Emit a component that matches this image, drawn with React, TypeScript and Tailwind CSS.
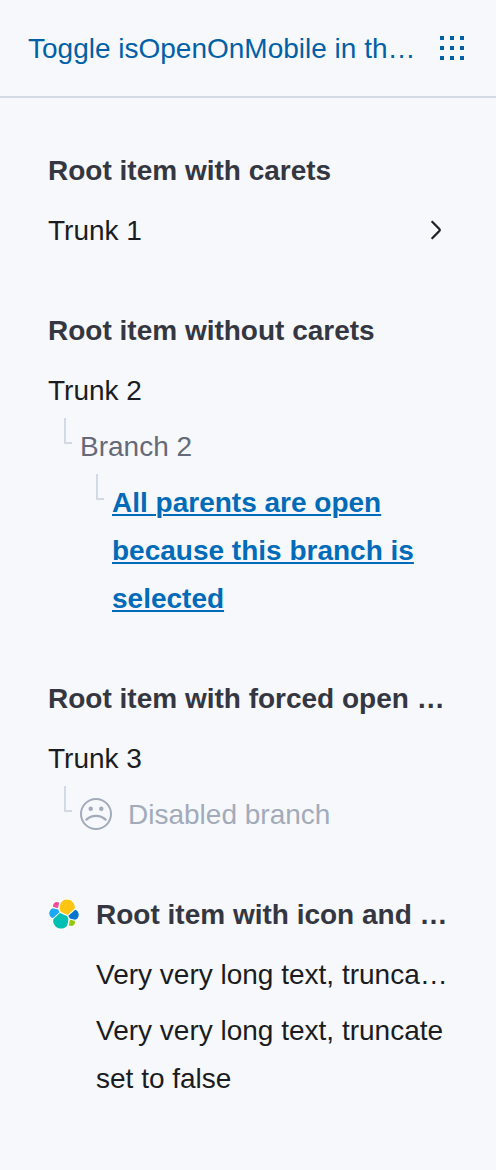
import type { ReactNode } from 'react';

function AppsIcon() {
  return (
    <svg className="size-8 shrink-0" viewBox="0 0 32 32" fill="currentColor" shapeRendering="crispEdges" aria-hidden="true">
      {[4, 14, 24].map((y) =>
        [4, 14, 24].map((x) => <rect key={`${x}-${y}`} x={x} y={y} width="4" height="4" />),
      )}
    </svg>
  );
}

function ArrowRightIcon() {
  return (
    <svg className="mb-0.5 size-6 shrink-0" viewBox="0 0 16 16" fill="currentColor" stroke="currentColor" strokeWidth="0.45" aria-hidden="true">
      <path d="M5.157 13.069l4.611-4.685a.546.546 0 0 0 0-.768L5.158 2.93a.552.552 0 0 1 0-.771.53.53 0 0 1 .759 0l4.61 4.684a1.65 1.65 0 0 1 0 2.312l-4.61 4.684a.53.53 0 0 1-.76 0 .552.552 0 0 1 0-.771z" />
    </svg>
  );
}

function FaceSadIcon() {
  return (
    <svg className="mb-0.5 size-8 shrink-0" viewBox="0 0 32 32" fill="none" aria-hidden="true">
      <circle cx="16" cy="16" r="15" stroke="currentColor" strokeWidth="2" />
      <circle cx="10.7" cy="10.7" r="2.2" fill="currentColor" />
      <circle cx="21.3" cy="10.7" r="2.2" fill="currentColor" />
      <path d="M6.4 21.6C9 19.2 12.3 17.8 16 17.8s7 1.4 9.6 3.8" stroke="currentColor" strokeWidth="2.3" strokeLinecap="round" />
    </svg>
  );
}

function ElasticLogo() {
  return (
    <svg className="mb-0.5 size-8 shrink-0" viewBox="0 0 32 32" aria-hidden="true">
      <path fill="#FFF" d="M32 16.77a6.334 6.334 0 0 0-4.15-5.93 9.055 9.055 0 0 0 .165-1.71 9.13 9.13 0 0 0-16.5-5.34A4.831 4.831 0 0 0 4.1 9.3 6.383 6.383 0 0 0 0 15.255a6.35 6.35 0 0 0 4.16 5.95 9.1 9.1 0 0 0 16.33 7.02 4.81 4.81 0 0 0 7.36-5.53A6.38 6.38 0 0 0 32 16.77z" />
      <path fill="#FEC514" d="M12.58 13.787l7.002 3.211 7.066-6.213a7.849 7.849 0 0 0 .152-1.557c0-4.287-3.464-7.762-7.737-7.762a7.728 7.728 0 0 0-6.386 3.375l-1.177 6.12 1.08 2.826z" />
      <path fill="#00BFB3" d="M5.333 21.228A7.964 7.964 0 0 0 5.19 22.8c0 4.3 3.47 7.785 7.752 7.785a7.746 7.746 0 0 0 6.39-3.398l1.166-6.1-1.556-2.985-7.03-3.212-6.58 6.338z" />
      <path fill="#F04E98" d="M5.288 9.073l4.799 1.136L11.138 4.73a3.785 3.785 0 0 0-6.083 3.03 3.848 3.848 0 0 0 .233 1.313z" />
      <path fill="#1BA9F5" d="M4.872 10.219a5.36 5.36 0 0 0-3.558 5.038 5.352 5.352 0 0 0 3.439 4.999l6.733-6.11-1.236-2.653-5.378-1.274z" />
      <path fill="#93C90E" d="M20.866 27.17a3.755 3.755 0 0 0 2.285.782 3.794 3.794 0 0 0 3.787-3.796 3.831 3.831 0 0 0-.232-1.32l-4.796-1.127-1.044 5.461z" />
      <path fill="#07C" d="M21.845 20.439l5.279 1.24a5.365 5.365 0 0 0 3.558-5.04 5.35 5.35 0 0 0-3.427-4.996l-6.903 6.077 1.493 2.719z" />
    </svg>
  );
}

function Title({ children }: { children: ReactNode }) {
  return <div className="truncate font-bold text-[#343741]">{children}</div>;
}

/* Elbow line that joins a nested item to its parent. */
function Nested({ children }: { children: ReactNode }) {
  return (
    <div className="mt-2 flex items-start pl-4">
      <span className="-mt-[5px] h-[26px] w-2 shrink-0 border-b-2 border-l-2 border-[#d3dae6]" />
      <div className="min-w-0 flex-1 pl-2">{children}</div>
    </div>
  );
}

export default function App() {
  return (
    <div className="min-h-[1170px] w-full bg-[#f7f8fc] font-['Liberation_Sans',Arial,sans-serif] text-[28px] leading-[48px] text-[#1a1c21]">
      <button type="button" className="flex h-[98px] w-full items-center gap-4 border-b-2 border-[#d3dae6] px-7 text-left text-[#0061a6]">
        <span className="min-w-0 flex-1 truncate pt-0.5">Toggle isOpenOnMobile in the state</span>
        <AppsIcon />
      </button>

      <nav className="flex flex-col gap-[52px] px-12 pt-[49px] pb-10">
        <section className="flex flex-col gap-3">
          <Title>Root item with carets</Title>
          <div className="flex items-center justify-between">
            <span>Trunk 1</span>
            <ArrowRightIcon />
          </div>
        </section>

        <section className="flex flex-col gap-3">
          <Title>Root item without carets</Title>
          <div>
            <div>Trunk 2</div>
            <Nested>
              <div className="text-[#646a77]">Branch 2</div>
              <Nested>
                <a href="#selected" className="block font-bold text-[#006bb8] underline decoration-2 underline-offset-2">
                  All parents are open because this branch is selected
                </a>
              </Nested>
            </Nested>
          </div>
        </section>

        <section className="flex flex-col gap-3">
          <Title>Root item with forced open trunk</Title>
          <div>
            <div>Trunk 3</div>
            <Nested>
              <div className="flex items-center gap-4 text-[#a2abba]">
                <FaceSadIcon />
                <span>Disabled branch</span>
              </div>
            </Nested>
          </div>
        </section>

        <section className="flex flex-col gap-3">
          <div className="flex items-center gap-4">
            <ElasticLogo />
            <Title>Root item with icon and forced truncation</Title>
          </div>
          <div className="flex flex-col gap-2 pl-12">
            <div className="truncate">Very very long text, truncated by default</div>
            <div>Very very long text, truncate set to false</div>
          </div>
        </section>
      </nav>
    </div>
  );
}
